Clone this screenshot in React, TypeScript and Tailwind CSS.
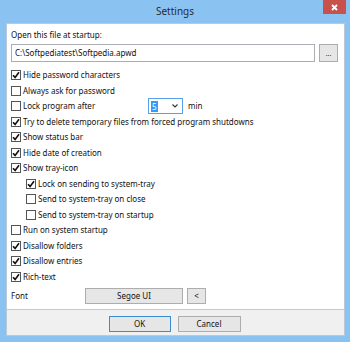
import React from 'react';

const FONT = { fontFamily: '"Noto Sans", "Open Sans", sans-serif' };

function Check({ checked }: { checked?: boolean }) {
  return (
    <span className="w-[10px] h-[10px] border border-[#555] bg-white flex items-center justify-center shrink-0">
      {checked && (
        <svg width="8" height="8" viewBox="0 0 8 8">
          <path d="M1 4.2 L3.1 6.4 L7 1.2" fill="none" stroke="#111" strokeWidth="1.6" />
        </svg>
      )}
    </span>
  );
}

function Row({
  label,
  checked,
  indent,
  labelWidth,
  children,
}: {
  label: string;
  checked?: boolean;
  indent?: boolean;
  labelWidth?: string;
  children?: React.ReactNode;
}) {
  return (
    <div className={`h-[15.5px] flex items-center ${indent ? 'pl-[15px]' : ''}`}>
      <Check checked={checked} />
      <span className={`ml-[2px] text-[8px] text-[#111] whitespace-nowrap ${labelWidth ?? ''}`}>{label}</span>
      {children}
    </div>
  );
}

export default function App() {
  return (
    <div className="w-[350px] h-[342px] bg-[#8ac3f2] flex flex-col overflow-hidden" style={FONT}>
      {/* Title bar */}
      <div className="h-[23px] shrink-0 grid grid-cols-[1fr_auto_1fr] items-start">
        <div />
        <div className="text-[10px] text-[#2b2b2b] leading-[22px]">Settings</div>
        <div className="flex justify-end pr-[4px]">
          <div className="w-[23px] h-[14px] bg-[#c9514c] flex items-center justify-center">
            <svg width="7" height="7" viewBox="0 0 7 7">
              <path d="M1 1 L6 6 M6 1 L1 6" stroke="white" strokeWidth="1.8" />
            </svg>
          </div>
        </div>
      </div>

      {/* Client area */}
      <div className="ml-[6px] mr-[5px] mb-[6px] flex-1 flex flex-col border border-[#b9c9d9] bg-white">
        <div className="flex-1 flex flex-col pl-[4px] pr-[6px]">
          <div className="text-[8px] text-[#111] mt-[5px] leading-[11px]">Open this file at startup:</div>
          <div className="flex mt-[4px] items-center">
            <div className="w-[304px] h-[18px] border border-[#abadb3] flex items-center pl-[3px] text-[8px] text-[#111]">
              C:\Softpediatest\Softpedia.apwd
            </div>
            <div className="ml-[4px] w-[19px] h-[18px] border border-[#acacac] bg-[#e6e6e6] flex items-center justify-center text-[7px] text-[#333] leading-none">
              ...
            </div>
          </div>

          <div className="flex flex-col mt-[5.25px]">
            <Row label="Hide password characters" checked />
            <Row label="Always ask for password" />
            <Row label="Lock program after" labelWidth="w-[125px]">
              <div className="w-[35px] h-[16px] border border-[#5aa0e6] flex items-center pl-[2px] pr-[4px]">
                <span className="bg-[#3399ff] text-white text-[8px] leading-[11px] px-[1px]">5</span>
                <svg className="ml-auto" width="6" height="4" viewBox="0 0 6 4">
                  <path d="M0.5 0.5 L3 3 L5.5 0.5" fill="none" stroke="#333" strokeWidth="1.1" />
                </svg>
              </div>
              <span className="ml-[5px] text-[8px] text-[#111]">min</span>
            </Row>
            <Row label="Try to delete temporary files from forced program shutdowns" checked />
            <Row label="Show status bar" checked />
            <Row label="Hide date of creation" checked />
            <Row label="Show tray-icon" checked />
            <Row label="Lock on sending to system-tray" checked indent />
            <Row label="Send to system-tray on close" indent />
            <Row label="Send to system-tray on startup" indent />
            <Row label="Run on system startup" />
            <Row label="Disallow folders" checked />
            <Row label="Disallow entries" checked />
            <Row label="Rich-text" checked />
          </div>

          <div className="flex items-center mt-[3.75px]">
            <span className="w-[74px] text-[8px] text-[#111]">Font</span>
            <div className="w-[98px] h-[16px] border border-[#adadad] bg-[#e6e6e6] flex items-center justify-center text-[8px] text-[#111]">
              Segoe UI
            </div>
            <div className="ml-[4px] w-[19px] h-[16px] border border-[#adadad] bg-[#e6e6e6] flex items-center justify-center text-[8px] text-[#111]">
              &lt;
            </div>
          </div>
        </div>

        {/* Footer */}
        <div className="h-[26px] shrink-0 border-t border-[#c8c8c8] bg-[#f0f0f0] flex justify-center items-start pt-[6px] gap-[7px] pr-[2px]">
          <div className="w-[62px] h-[16px] border border-[#3c8ad0] bg-[#e6e6e6] flex items-center justify-center text-[8px] text-[#111]">
            OK
          </div>
          <div className="w-[63px] h-[16px] border border-[#adadad] bg-[#e6e6e6] flex items-center justify-center text-[8px] text-[#111]">
            Cancel
          </div>
        </div>
      </div>
    </div>
  );
}
